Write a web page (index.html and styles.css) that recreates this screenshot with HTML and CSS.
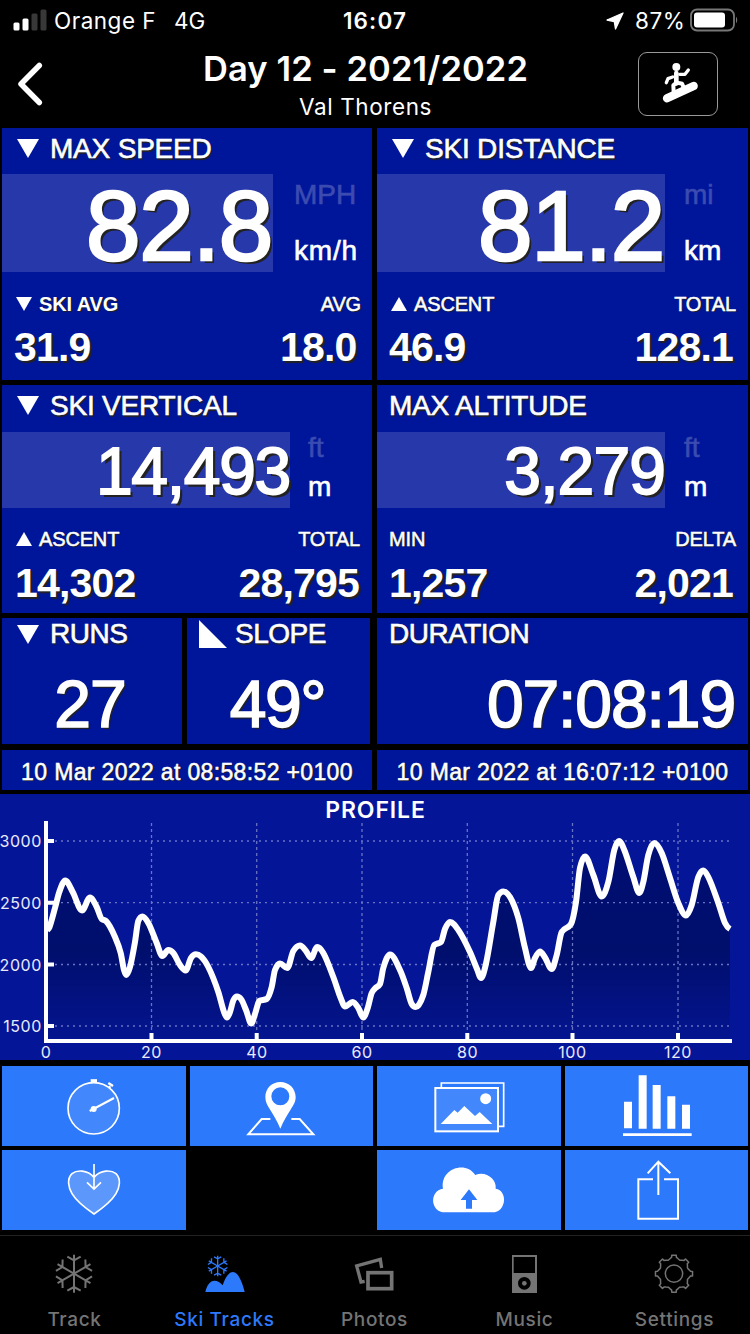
FILE: index.html
```html
<!DOCTYPE html>
<html lang="en">
<head>
<meta charset="utf-8">
<title>Ski Tracks</title>
<link rel="stylesheet" href="styles.css">
</head>
<body>
<div class="app">
  <div class="status">
    <svg class="signal" viewBox="0 0 34 22"><rect x="0.5" y="13.5" width="6" height="8" rx="1.5" fill="#fff"/><rect x="9.500" y="9.500" width="6" height="12" rx="1.500" fill="#fff"/><rect x="18.500" y="4.500" width="6" height="17" rx="1.500" fill="#383838"/><rect x="27.500" y="0.500" width="6" height="21" rx="1.500" fill="#383838"/></svg>
    <span class="carrier">Orange F</span><span class="network">4G</span>
    <span class="clock">16:07</span>
    <svg class="location" viewBox="0 0 18 18"><path d="M17 1L9.500 17L8.300 9.700L1 8Z" fill="#fff" stroke="#fff" stroke-width="1.300" stroke-linejoin="round"/></svg>
    <span class="percent">87%</span>
    <svg class="battery" viewBox="0 0 49 24"><rect x="1" y="1.500" width="43" height="21" rx="6" fill="none" stroke="#777" stroke-width="1.800"/><rect x="4" y="4.500" width="31" height="15" rx="3" fill="#fff"/><path d="M46 8.500Q48.500 12 46 15.500Z" fill="#777"/></svg>
  </div>

  <header class="header">
    <svg class="back" viewBox="0 0 28 44"><path d="M22.300 3.500L4 22L22.300 40.500" fill="none" stroke="#fff" stroke-width="5.500" stroke-linecap="round" stroke-linejoin="round"/></svg>
    <div class="heading"><h1>Day 12 - 2021/2022</h1><p>Val Thorens</p></div>
    <div class="activity">
      <svg viewBox="790 156 240 192"><g fill="none" stroke="#fff" stroke-linecap="round" stroke-linejoin="round"><path d="M877 295L957 258" stroke-width="25"/><path d="M905 219V250" stroke-width="14"/><path d="M915 223L931 223L941 210" stroke-width="10"/><path d="M894 231L880 236L875 248" stroke-width="10"/><path d="M897 276L896 256Q905 245 922 251L926 260" stroke-width="12"/></g><circle cx="905" cy="201" r="12" fill="#fff"/></svg>
    </div>
  </header>

  <main class="stats">
    <section class="tile">
      <h2><svg class="tri" viewBox="0 0 22 19"><path d="M0 0H22L11 19Z"/></svg>MAX SPEED</h2>
      <div class="main tall"><div class="value narrow">82.8</div><div class="units"><span class="off">MPH</span><span class="kmh">km/h</span></div></div>
      <div class="labels"><span class="strong"><svg class="mini" viewBox="0 0 16 14"><path d="M0 0H16L8 14Z"/></svg>SKI AVG</span><span class="avg">AVG</span></div>
      <div class="subs"><span>31.9</span><span class="average">18.0</span></div>
    </section>
    <section class="tile">
      <h2><svg class="tri" viewBox="0 0 22 19"><path d="M0 0H22L11 19Z"/></svg>SKI DISTANCE</h2>
      <div class="main tall"><div class="value">81.2</div><div class="units"><span class="off">mi</span><span>km</span></div></div>
      <div class="labels"><span><svg class="mini" viewBox="0 0 16 14"><path d="M0 14H16L8 0Z"/></svg>ASCENT</span><span>TOTAL</span></div>
      <div class="subs"><span>46.9</span><span class="tail-one">128.1</span></div>
    </section>
    <section class="tile second">
      <h2><svg class="tri" viewBox="0 0 22 19"><path d="M0 0H22L11 19Z"/></svg>SKI VERTICAL</h2>
      <div class="main short"><div class="value wide">14,493</div><div class="units"><span class="off">ft</span><span>m</span></div></div>
      <div class="labels"><span><svg class="mini" viewBox="0 0 16 14"><path d="M0 14H16L8 0Z"/></svg>ASCENT</span><span>TOTAL</span></div>
      <div class="subs"><span class="lead-one">14,302</span><span>28,795</span></div>
    </section>
    <section class="tile second">
      <h2>MAX ALTITUDE</h2>
      <div class="main short"><div class="value">3,279</div><div class="units inset"><span class="off">ft</span><span>m</span></div></div>
      <div class="labels"><span>MIN</span><span>DELTA</span></div>
      <div class="subs"><span>1,257</span><span class="tail-one">2,021</span></div>
    </section>
    <div class="pair">
      <section class="tile brief"><h2><svg class="tri" viewBox="0 0 22 19"><path d="M0 0H22L11 19Z"/></svg>RUNS</h2><div class="figure">27</div></section>
      <section class="tile brief slope"><h2><svg class="wedge" viewBox="0 0 28 28"><path d="M0 0V28H28Z"/></svg>SLOPE</h2><div class="figure">49°</div></section>
    </div>
    <section class="tile brief"><h2>DURATION</h2><div class="figure duration">07:08:19</div></section>
    <div class="tile date">10 Mar 2022 at 08:58:52 +0100</div>
    <div class="tile date">10 Mar 2022 at 16:07:12 +0100</div>
  </main>

  <svg class="chart" viewBox="0 794 750 266">
    <defs><linearGradient id="shade" gradientUnits="userSpaceOnUse" x1="0" y1="840" x2="0" y2="1040"><stop offset="0" stop-color="#000e74"/><stop offset="0.55" stop-color="#000e6c"/><stop offset="1" stop-color="#041590"/></linearGradient></defs>
    <path id="area" fill="url(#shade)"/>
    <g class="grid"><path d="M55 841H729M55 902.700H729M55 964.500H729M55 1026H729" stroke-dasharray="2 4"/><path d="M151.500 823V1033M256.700 823V1033M362 823V1033M467.300 823V1033M572.500 823V1033M678 823V1033" stroke-dasharray="3 3"/></g>
    <path id="line" fill="none" stroke="#fff" stroke-width="6" stroke-linejoin="round"/>
    <path class="axis" d="M46 821V1041H732M48 841H54M48 902.700H54M48 964.500H54M48 1026H54M151.500 1040V1033M256.700 1040V1033M362 1040V1033M467.300 1040V1033M572.500 1040V1033M678 1040V1033"/>
    <text class="chart-title" x="375.500" y="817.500">PROFILE</text>
    <g class="ticks y"><text x="42" y="847">3000</text><text x="42" y="909">2500</text><text x="42" y="970.500">2000</text><text x="42" y="1032">1500</text></g>
    <g class="ticks x"><text x="46" y="1057.500">0</text><text x="151.500" y="1057.500">20</text><text x="257" y="1057.500">40</text><text x="362" y="1057.500">60</text><text x="467.500" y="1057.500">80</text><text x="572.500" y="1057.500">100</text><text x="678" y="1057.500">120</text></g>
  </svg>

  <nav class="actions">
    <div class="action"><svg viewBox="6 18 552 240"><circle cx="281" cy="145" r="77" fill="#4288fc" stroke="#fff" stroke-width="5"/><path d="M272 62H291" stroke="#fff" stroke-width="9"/><path d="M325 69L339 78M331 79L326 85" stroke="#fff" stroke-width="7"/><path d="M269 153L342 114" stroke="#fff" stroke-width="6"/><circle cx="281" cy="147" r="9" fill="#fff"/></svg></div>
    <div class="action"><svg viewBox="570 18 549 240"><path d="M811 177H785L745 223H940L899 177H874" fill="none" stroke="#fff" stroke-width="6"/><path fill-rule="evenodd" fill="#fff" d="M841 66C815 66 796 86 796 111C796 126 802 135 809 147C820 165 832 184 841 206C850 184 862 165 873 147C880 135 887 126 887 111C887 86 867 66 841 66ZM841 82A27 27 0 1 1 841 136A27 27 0 1 1 841 82Z"/></svg></div>
    <div class="action"><svg viewBox="6 18 552 240"><path d="M199 82V69H386V199H371" fill="none" stroke="#fff" stroke-width="5"/><rect x="181" y="84" width="188" height="130" fill="#4288fc" stroke="#fff" stroke-width="6"/><circle cx="332" cy="116" r="16.500" fill="#fff"/><path d="M197 192L238 150L248 158L268 138L300 168L314 156L352 192Z" fill="#fff"/></svg></div>
    <div class="action"><svg viewBox="570 18 549 240" fill="#fff"><path d="M747 125h24v80h-24zM791 46h24v160h-24zM833 75h24v131h-24zM877 109h24v97h-24zM921 134h24v72h-24zM744 220h206v8h-206z"/></svg></div>
    <div class="action"><svg viewBox="6 270 552 240"><path d="M282 352C262 329 231 329 216 341C200 357 205 382 216 401C231 426 257 445 282 462C307 445 333 426 348 401C359 382 364 357 348 341C333 329 302 329 282 352Z" fill="#5c98fc"/><path d="M282 352C262 329 231 329 216 341C200 357 205 382 216 401C231 426 257 445 282 462C307 445 333 426 348 401C359 382 364 357 348 341C333 329 302 329 282 352ZM282 312V387M261 367L282 387L303 367" fill="none" stroke="#fff" stroke-width="5"/></svg></div>
    <div class="gap"></div>
    <div class="action"><svg viewBox="6 270 552 240"><path d="M211 457C164 457 163 391 204 386C194 327 271 300 301 345C331 331 366 357 362 386C399 391 395 457 352 457Z" fill="#fff"/><path d="M282 388L307 420H291V446H273V420H257Z" fill="#2d79fb"/></svg></div>
    <div class="action"><svg viewBox="570 270 549 240" fill="none" stroke="#fff" stroke-width="6"><path d="M834 358H790V476H909V358H867M850 405V304M818 340L850 305L886 340"/></svg></div>
  </nav>

  <footer class="tabs">
    <div class="tab"><svg viewBox="0 570 450 140" fill="none" stroke="currentColor" stroke-width="6"><defs><g id="flake"><path id="arm" d="M0 0V-57M-20 -51L0 -40L20 -51"/><use href="#arm" transform="rotate(60)"/><use href="#arm" transform="rotate(120)"/><use href="#arm" transform="rotate(180)"/><use href="#arm" transform="rotate(240)"/><use href="#arm" transform="rotate(300)"/></g></defs><use href="#flake" transform="translate(222 641)"/></svg><span>Track</span></div>
    <div class="tab active"><svg viewBox="450 570 450 140"><use href="#flake" transform="translate(653 618) scale(.54)" fill="none" stroke="currentColor" stroke-width="7.500"/><path d="M616 696C621 674 631 662 643 662C653 662 661 668 668 676C677 650 687 636 699 636C715 636 727 667 734 696Z" fill="currentColor"/></svg><span>Ski Tracks</span></div>
    <div class="tab"><svg viewBox="900 570 450 140" fill="none" stroke="currentColor"><path d="M1094 664L1083 666L1070 618L1141 598L1145 624" stroke-width="10"/><rect x="1104" y="638" width="71" height="48" stroke-width="11"/></svg><span>Photos</span></div>
    <div class="tab"><svg viewBox="225 570 450 140"><path fill="currentColor" fill-rule="evenodd" d="M411 585H486V699H411ZM416 591V639H480V591ZM448 651A19 19 0 1 0 448 689A19 19 0 1 0 448 651Z"/><circle cx="448" cy="670" r="7" fill="currentColor"/></svg><span>Music</span></div>
    <div class="tab"><svg viewBox="675 570 450 140" fill="none" stroke="currentColor" stroke-width="4.500"><circle cx="897" cy="641" r="26"/><path id="gear" stroke-linejoin="round" d=""/></svg><span>Settings</span></div>
  </footer>
</div>
<script src="chart.js"></script>
</body>
</html>
```

FILE: styles.css
```css
* { box-sizing: border-box; margin: 0; padding: 0; }
body { background: #000; color: #fff; font-family: "Liberation Sans", Arial, sans-serif; }
svg { display: block; flex: none; }
.app { width: 750px; height: 1334px; display: flex; flex-direction: column; overflow: hidden; white-space: nowrap; }

.status { height: 42px; display: grid; grid-template-columns: 41px 120px 169px 263px 29px 55px 1fr; align-items: center; padding-left: 13px; font: 400 22.500px/42px Inter, sans-serif; }
.signal { width: 34px; height: 22px; margin-top: -3px; }
.carrier { letter-spacing: .5px; }
.clock { font-weight: 600; letter-spacing: 1.100px; }
.location { width: 18px; height: 18px; margin-top: -1px; }
.percent { letter-spacing: .5px; }
.battery { width: 49px; height: 24px; margin-top: -3px; }

.header { height: 86px; display: grid; grid-template-columns: 113px 505px 1fr; }
.back { width: 28px; height: 44px; margin: 20px 0 0 17px; }
.heading { text-align: center; }
.heading h1 { font: 600 34.500px/44px Inter, sans-serif; padding-top: 5px; letter-spacing: .1px; }
.heading p { font: 400 22.500px/30px Inter, sans-serif; letter-spacing: .6px; padding-top: 1px; }
.activity { width: 80px; height: 64px; margin: 10px 0 0 20px; border: 1px solid #999; border-radius: 9px; }
.activity svg { width: 80px; height: 64px; margin: -1px; }

.stats { height: 666px; padding: 0 2px; display: grid; grid-template-columns: 370px 371px; grid-template-rows: 252px 228px 126px 40px; column-gap: 5px; row-gap: 5px; }
.tile { background: #00169a; overflow: hidden; }
.tile h2 { height: 46px; display: flex; align-items: flex-start; padding-left: 12px; font-size: 28px; font-weight: 400; line-height: 41px; letter-spacing: -.2px; -webkit-text-stroke: .6px #fff; text-shadow: 1px 2px 1px #222; }
.tri { width: 22px; height: 19px; margin: 11px 11px 0 3px; fill: #fff; }
.second h2 { height: 47px; }
.main { display: flex; }
.value { width: 288px; background: #2638aa; text-align: right; text-shadow: 3px 3px 0 #222; }
.value.narrow { width: 271px; }
.tall { height: 98px; }
.tall .value { font-size: 98px; line-height: 105px; letter-spacing: -1.200px; padding-right: 1px; -webkit-text-stroke: 2.600px #fff; }
.short { height: 76px; }
.short .value { font-size: 66px; line-height: 79px; letter-spacing: -.9px; -webkit-text-stroke: 1.800px #fff; }
.short .value.wide { letter-spacing: -1.300px; }
.units { display: flex; flex-direction: column; padding-left: 19px; font-size: 28px; line-height: 42px; -webkit-text-stroke: .6px #fff; }
.tall .units { justify-content: space-between; }
.narrow + .units { padding-left: 21px; }
.kmh { letter-spacing: .8px; }
.short .units { line-height: 39px; padding-left: 18px; }
.short .units.inset { padding-left: 19px; }
.short .units span { margin-top: -4px; margin-bottom: 4px; }
.units .off { color: #3b4bb0; -webkit-text-stroke-color: #3b4bb0; }
.labels, .subs { display: flex; justify-content: space-between; padding: 0 12px; }
.labels { margin-top: 20px; height: 24px; font-size: 20px; line-height: 24px; letter-spacing: -.15px; -webkit-text-stroke: .5px #fff; text-shadow: 1px 1px 1px #222; }
.labels span { display: flex; }
.labels .strong { font-weight: 700; letter-spacing: -.1px; -webkit-text-stroke: 0; }
.labels .avg { margin-right: -1px; }
.mini { width: 16px; height: 14px; margin: 5px 7px 0 2px; fill: #fff; }
.subs { font-weight: 700; font-size: 41px; line-height: 54px; letter-spacing: -.8px; padding-right: 13px; padding-top: 4px; text-shadow: 2px 2px 1px #222; }
.second .labels { margin-top: 19px; }
.second .subs { padding-top: 5px; }
.tail-one { margin-right: 2px; }
.lead-one { margin-left: 1px; }
.average { margin-right: 2.500px; }

.pair { display: grid; grid-template-columns: 180px 183px; column-gap: 5px; }
.brief h2 { height: 32px; line-height: 32px; letter-spacing: -.5px; }
.brief .tri { margin-top: 7px; }
.wedge { width: 28px; height: 28px; margin: 2px 8px 0 0; fill: #fff; }
.figure { font-size: 66px; line-height: 108px; text-align: center; letter-spacing: -1px; padding-right: 4px; -webkit-text-stroke: 1.600px #fff; text-shadow: 2px 2px 1px #222; }
.slope .figure { padding-right: 2px; letter-spacing: -1.500px; }
.figure.duration { text-align: right; padding-right: 13px; letter-spacing: -1.100px; }
.date { font-size: 23px; line-height: 44px; text-align: center; letter-spacing: .35px; -webkit-text-stroke: .5px #fff; text-shadow: 1px 1px 1px #222; margin-top: 1px; height: 40px; }

.chart { width: 750px; height: 266px; background: #051598; font-family: Inter, sans-serif; }
.grid { fill: none; stroke: #6873c4; stroke-width: 1.300; }
.axis { fill: none; stroke: #fff; stroke-width: 4; }
.chart-title { fill: #fff; font-size: 23px; font-weight: 600; letter-spacing: .9px; text-anchor: middle; }
.ticks { fill: #e9ebfb; font-size: 16px; letter-spacing: .6px; }
.ticks.y { text-anchor: end; }
.ticks.x { text-anchor: middle; }

.actions { margin-top: 6px; padding: 0 2px; display: grid; grid-template-columns: 184px 183px 184px 183px; grid-template-rows: 80px 80px; gap: 4px; }
.action { background: #2d79fb; }
.action svg { width: 100%; height: 80px; }

.tabs { margin-top: 5px; height: 99px; border-top: 1px solid #222; display: grid; grid-template-columns: repeat(5, 150px); color: #747474; }
.tab { display: flex; flex-direction: column; align-items: center; padding-top: 14px; font: 500 19px/24px Inter, sans-serif; letter-spacing: .65px; }
.tab svg { width: 150px; height: 46.700px; }
.tab span { margin-top: 11.300px; margin-right: 1px; }
.active { color: #2d79fb; }
```

FILE: chart.js
```js
// Altitude profile samples in chart coordinates.
const pts = [[47,930.5],[49.5,927],[55,908],[59.3,892],[65.3,880.5],[72.7,892],[82,910.5],[90,897.5],[96.7,907],[101.7,919],[106,921],[115,937],[120.7,953],[124,970],[126.3,975],[130,967],[135,942],[138.3,921],[142.3,916.5],[148.3,923],[156.7,943],[162.3,956],[168.3,950],[173.3,953],[180,965],[185.7,970.5],[191,958],[196,954.3],[201,956.5],[208.3,967],[218.3,992],[224,1012],[227,1017.5],[230,1012],[233.5,1000],[237,996.5],[241,999],[246,1010],[251.3,1023.5],[255.3,1013],[259.3,1001],[266.7,999],[271.7,987],[275,970],[280,963.5],[287.3,968],[293.3,951],[300,945.5],[306,951],[311,958],[317.3,947],[323.3,953],[333.3,977],[340.7,998],[345,1006.5],[352.7,1002],[358.3,1008],[363.3,1017.5],[367.7,1008],[371.7,993],[375,988.5],[380,984],[383.3,968],[390,954.5],[400,970],[406.7,988],[411.7,1004],[415.7,1007],[423.3,995],[428.3,972],[434.3,945],[441,942],[445,929],[450,922],[458.3,930],[470,952],[477,969],[481,978],[485.7,965],[493.3,922],[498.3,895],[503.3,891.5],[510,897],[518.3,918],[525,948],[531,968],[535,958],[540,951.5],[545,957.5],[551.7,969],[556.7,955],[561.7,932],[571,924],[576,902],[580,868],[585,856.5],[593.3,875],[601.7,896.5],[608.3,882],[614.3,850],[619,841],[624.3,850],[633.3,877],[639.3,893],[643.3,882],[648.3,855],[654.3,843],[661.7,853],[670,878],[678.3,903],[686,915.5],[691.7,905],[698.3,877],[703.3,870.5],[708.3,877],[718.3,903],[725,923],[730,929]];

// Monotone cubic tangents keep peaks and valleys where they were sampled.
const n = pts.length;
const slope = i => (pts[i + 1][1] - pts[i][1]) / (pts[i + 1][0] - pts[i][0]);
const tangent = pts.map((p, i) => {
  if (i === 0) return slope(0);
  if (i === n - 1) return slope(n - 2) / 2;
  const a = slope(i - 1), b = slope(i);
  return a * b <= 0 ? 0 : Math.sign(a) * Math.min(Math.abs(a + b) / 2, 2 * Math.abs(a), 2 * Math.abs(b));
});
let d = `M${pts[0]}`;
for (let i = 0; i < n - 1; i++) {
  const [x0, y0] = pts[i], [x1, y1] = pts[i + 1], h = (x1 - x0) / 3;
  d += `C${x0 + h},${y0 + h * tangent[i]} ${x1 - h},${y1 - h * tangent[i + 1]} ${x1},${y1}`;
}
document.getElementById('line').setAttribute('d', d);
document.getElementById('area').setAttribute('d', d + 'V1040H47Z');

// Eight-toothed cog outline.
let g = '';
for (let k = 0; k < 8; k++) {
  [[-22, 44], [-14, 47], [-8, 50], [-7, 56], [7, 56], [8, 50], [14, 47], [22, 44]].forEach(([a, r]) => {
    const t = (k * 45 + a - 90) * Math.PI / 180;
    g += (g ? 'L' : 'M') + (897 + r * Math.cos(t)).toFixed(1) + ' ' + (641 + r * Math.sin(t)).toFixed(1);
  });
}
document.getElementById('gear').setAttribute('d', g + 'Z');
```
